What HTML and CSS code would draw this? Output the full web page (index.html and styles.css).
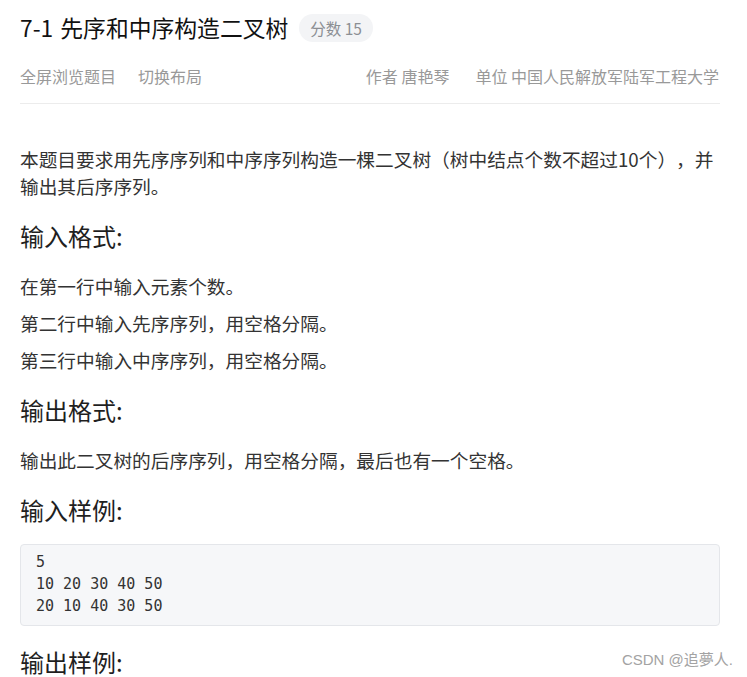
FILE: index.html
```html
<!DOCTYPE html>
<html lang="zh-CN">
<head>
<meta charset="utf-8">
<title>7-1 先序和中序构造二叉树</title>
<link rel="stylesheet" href="styles.css">
</head>
<body>
<div class="page">
  <div class="header">
    <h1 class="title">7-1 先序和中序构造二叉树</h1>
    <span class="badge">分数 15</span>
  </div>
  <div class="meta">
    <div class="meta-group meta-left">
      <span>全屏浏览题目</span>
      <span>切换布局</span>
    </div>
    <div class="meta-group meta-right">
      <span>作者 唐艳琴</span>
      <span>单位 中国人民解放军陆军工程大学</span>
    </div>
  </div>
  <div class="content">
    <p class="first">本题目要求用先序序列和中序序列构造一棵二叉树（树中结点个数不超过10个），并输出其后序序列。</p>
    <h2>输入格式:</h2>
    <p>在第一行中输入元素个数。</p>
    <p>第二行中输入先序序列，用空格分隔。</p>
    <p>第三行中输入中序序列，用空格分隔。</p>
    <h2>输出格式:</h2>
    <p>输出此二叉树的后序序列，用空格分隔，最后也有一个空格。</p>
    <h2>输入样例:</h2>
    <pre class="code">5
10 20 30 40 50
20 10 40 30 50</pre>
    <h2>输出样例:</h2>
  </div>
</div>
<div class="watermark">CSDN @追夢人.</div>
</body>
</html>
```
FILE: styles.css
```css
html, body {
  margin: 0;
  padding: 0;
  background: #ffffff;
}
body {
  font-family: "Noto Sans CJK SC", "Noto Sans", sans-serif;
  color: #333333;
  position: relative;
  height: 677px;
  overflow: hidden;
  text-spacing-trim: space-all;
}
.page {
  width: 700px;
  padding: 0 27px 0 20px;
}
.header {
  display: flex;
  align-items: center;
  gap: 11px;
  margin-top: 14px;
  height: 28px;
}
.title {
  margin: 0;
  font-size: 22.8px;
  line-height: 28px;
  font-weight: 400;
  word-spacing: 2px;
  color: #111111;
}
.badge {
  height: 28px;
  line-height: 28px;
  padding: 0 11px;
  border-radius: 14px;
  background: #f3f4f6;
  color: #8c8f94;
  font-size: 15.5px;
}
.meta {
  display: flex;
  justify-content: space-between;
  margin-top: 22px;
  padding-bottom: 15px;
  border-bottom: 1px solid #ececec;
  font-size: 16px;
  line-height: 24px;
  color: #999999;
}
.meta-group {
  display: flex;
}
.meta-left {
  gap: 22px;
}
.meta-right {
  gap: 26px;
  padding-right: 1px;
}
.content p {
  margin: 10px 0 0;
  font-size: 18.7px;
  line-height: 27px;
  color: #333333;
}
.content p.first {
  margin-top: 41px;
}
.content h2 {
  margin: 21px 0 0;
  font-size: 24px;
  line-height: 32px;
  font-weight: 400;
  color: #1f1f1f;
}
.content h2 + p {
  margin-top: 20px;
}
.code {
  margin: 18px 0 0;
  padding: 6px 15px 8px;
  background: #f6f7f9;
  border: 1px solid #e4e6ea;
  border-radius: 4px;
  font-family: "DejaVu Sans Mono", "Liberation Mono", monospace;
  font-size: 15px;
  line-height: 22px;
  color: #333333;
}
.code + h2 {
  margin-top: 20px;
}
.watermark {
  position: absolute;
  right: 14px;
  top: 650px;
  font-family: "Liberation Sans", "Noto Sans CJK SC", sans-serif;
  font-size: 15px;
  line-height: 20px;
  color: #a3a3a3;
}
```
